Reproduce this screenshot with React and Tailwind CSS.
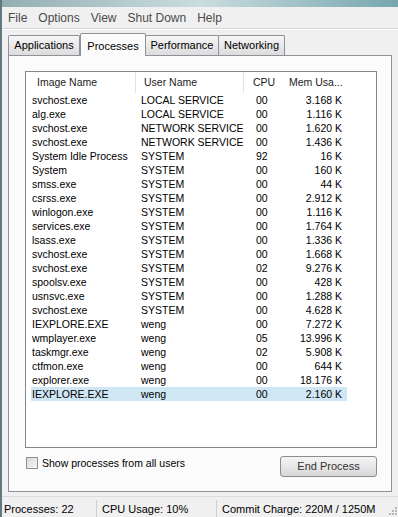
import React from 'react';

const rows = [
  ['svchost.exe', 'LOCAL SERVICE', '00', '3.168 K'],
  ['alg.exe', 'LOCAL SERVICE', '00', '1.116 K'],
  ['svchost.exe', 'NETWORK SERVICE', '00', '1.620 K'],
  ['svchost.exe', 'NETWORK SERVICE', '00', '1.436 K'],
  ['System Idle Process', 'SYSTEM', '92', '16 K'],
  ['System', 'SYSTEM', '00', '160 K'],
  ['smss.exe', 'SYSTEM', '00', '44 K'],
  ['csrss.exe', 'SYSTEM', '00', '2.912 K'],
  ['winlogon.exe', 'SYSTEM', '00', '1.116 K'],
  ['services.exe', 'SYSTEM', '00', '1.764 K'],
  ['lsass.exe', 'SYSTEM', '00', '1.336 K'],
  ['svchost.exe', 'SYSTEM', '00', '1.668 K'],
  ['svchost.exe', 'SYSTEM', '02', '9.276 K'],
  ['spoolsv.exe', 'SYSTEM', '00', '428 K'],
  ['usnsvc.exe', 'SYSTEM', '00', '1.288 K'],
  ['svchost.exe', 'SYSTEM', '00', '4.628 K'],
  ['IEXPLORE.EXE', 'weng', '00', '7.272 K'],
  ['wmplayer.exe', 'weng', '05', '13.996 K'],
  ['taskmgr.exe', 'weng', '02', '5.908 K'],
  ['ctfmon.exe', 'weng', '00', '644 K'],
  ['explorer.exe', 'weng', '00', '18.176 K'],
  ['IEXPLORE.EXE', 'weng', '00', '2.160 K'],
];

const menus = ['File', 'Options', 'View', 'Shut Down', 'Help'];

function Tab({ label, active, width }) {
  if (active) {
    return (
      <div
        className={`${width} h-[23px] -mb-px z-10 bg-[#fbfbfb] border border-b-0 border-[#8e9199] rounded-t-[2px] flex items-start justify-center pt-[4px] text-[11px] text-black`}
      >
        {label}
      </div>
    );
  }
  return (
    <div
      className={`${width} h-[20px] bg-gradient-to-b from-[#f6f6f6] to-[#dcdcdc] border border-b-0 border-[#8e9199] rounded-t-[2px] flex items-center justify-center text-[11px] text-black -ml-px first:ml-0`}
    >
      {label}
    </div>
  );
}

export default function App() {
  const last = rows.length - 1;

  return (
    <div className="w-[398px] h-[517px] overflow-hidden bg-[#f0f0f0] border-l-2 border-[#5f7b80] flex flex-col font-['Liberation_Sans',Arial,sans-serif]">
      {/* Title strip */}
      <div className="h-[7px] shrink-0 bg-gradient-to-r from-[#93aeb2] via-[#cadddf] to-[#76a6ae]" />

      {/* Menu bar */}
      <div className="h-[21px] shrink-0 flex items-center pl-[6px] gap-[11px] text-[12px] text-[#4a4a4a]">
        {menus.map((m) => (
          <span key={m}>{m}</span>
        ))}
      </div>
      <div className="h-px shrink-0 bg-[#d6d6d6]" />
      <div className="h-px shrink-0 bg-white" />

      {/* Tabs */}
      <div className="shrink-0 pl-[6px] pt-[1px] flex items-end h-[25px]">
        <Tab label="Applications" width="w-[72px]" />
        <Tab label="Processes" width="w-[66px]" active />
        <Tab label="Performance" width="w-[74px]" />
        <Tab label="Networking" width="w-[67px]" />
      </div>

      {/* Tab panel */}
      <div className="ml-[6px] w-[384px] h-[437px] shrink-0 border border-[#8e9199] bg-[#fbfbfb] pt-[15px] pl-[16px] pr-[14px] flex flex-col">
        {/* List */}
        <div className="h-[377px] border border-[#828790] bg-white flex flex-col">
          <div className="h-[21px] grid grid-cols-[105px_108px_36px_67px] ml-[5px] text-[10.5px] text-[#222]">
            <div className="pl-[6px] flex items-center border-r border-[#e3e3e3]">Image Name</div>
            <div className="pl-[8px] flex items-center border-r border-[#e3e3e3]">User Name</div>
            <div className="pl-[9px] flex items-center">CPU</div>
            <div className="pl-[9px] flex items-center">Mem Usa...</div>
          </div>
          {rows.map((r, i) => (
            <div
              key={i}
              className={`h-[14px] grid grid-cols-[105px_108px_36px_67px] ml-[5px] w-[316px] text-[10.5px] leading-[14px] text-black whitespace-nowrap ${i === last ? 'bg-[#cfe6f4]' : ''}`}
            >
              <div className="pl-[1px] overflow-hidden">{r[0]}</div>
              <div className="pl-[5px] overflow-hidden">{r[1]}</div>
              <div className="pl-[12px]">{r[2]}</div>
              <div className="pr-[5px] text-right">{r[3]}</div>
            </div>
          ))}
        </div>

        {/* Bottom controls */}
        <div className="flex items-start justify-between mt-[8px]">
          <div className="flex items-center gap-[4px] pl-[1px]">
            <div className="w-[12px] h-[12px] border border-[#8f8f8f] bg-gradient-to-br from-[#d8d8d8] to-[#f6f6f6]" />
            <span className="text-[10.5px] text-black leading-[14px]">Show processes from all users</span>
          </div>
          <div className="w-[97px] h-[21px] rounded-[3px] border border-[#8c8c8c] bg-gradient-to-b from-[#f4f4f4] via-[#e8e8e8] to-[#d6d6d6] flex items-center justify-center text-[11px] text-[#333]">
            End Process
          </div>
        </div>
      </div>

      {/* Status bar */}
      <div className="mt-[4px] h-[22px] shrink-0 border-t border-[#dcdcdc] flex items-stretch text-[11px] text-black relative">
        <div className="w-[95px] pl-[2px] flex items-center border-r border-[#d0d0d0] mt-[3px]">Processes: 22</div>
        <div className="w-[120px] pl-[5px] flex items-center border-r border-[#d0d0d0] mt-[3px]">CPU Usage: 10%</div>
        <div className="pl-[5px] flex items-center mt-[3px]">Commit Charge: 220M / 1250M</div>
        <svg className="absolute right-[1px] bottom-[1px]" width="10" height="10" viewBox="0 0 10 10">
          {[[8, 0], [8, 3], [5, 3], [8, 6], [5, 6], [2, 6]].map(([x, y], k) => (
            <rect key={k} x={x} y={y} width="2" height="2" fill="#b8b8b8" />
          ))}
        </svg>
      </div>
    </div>
  );
}
